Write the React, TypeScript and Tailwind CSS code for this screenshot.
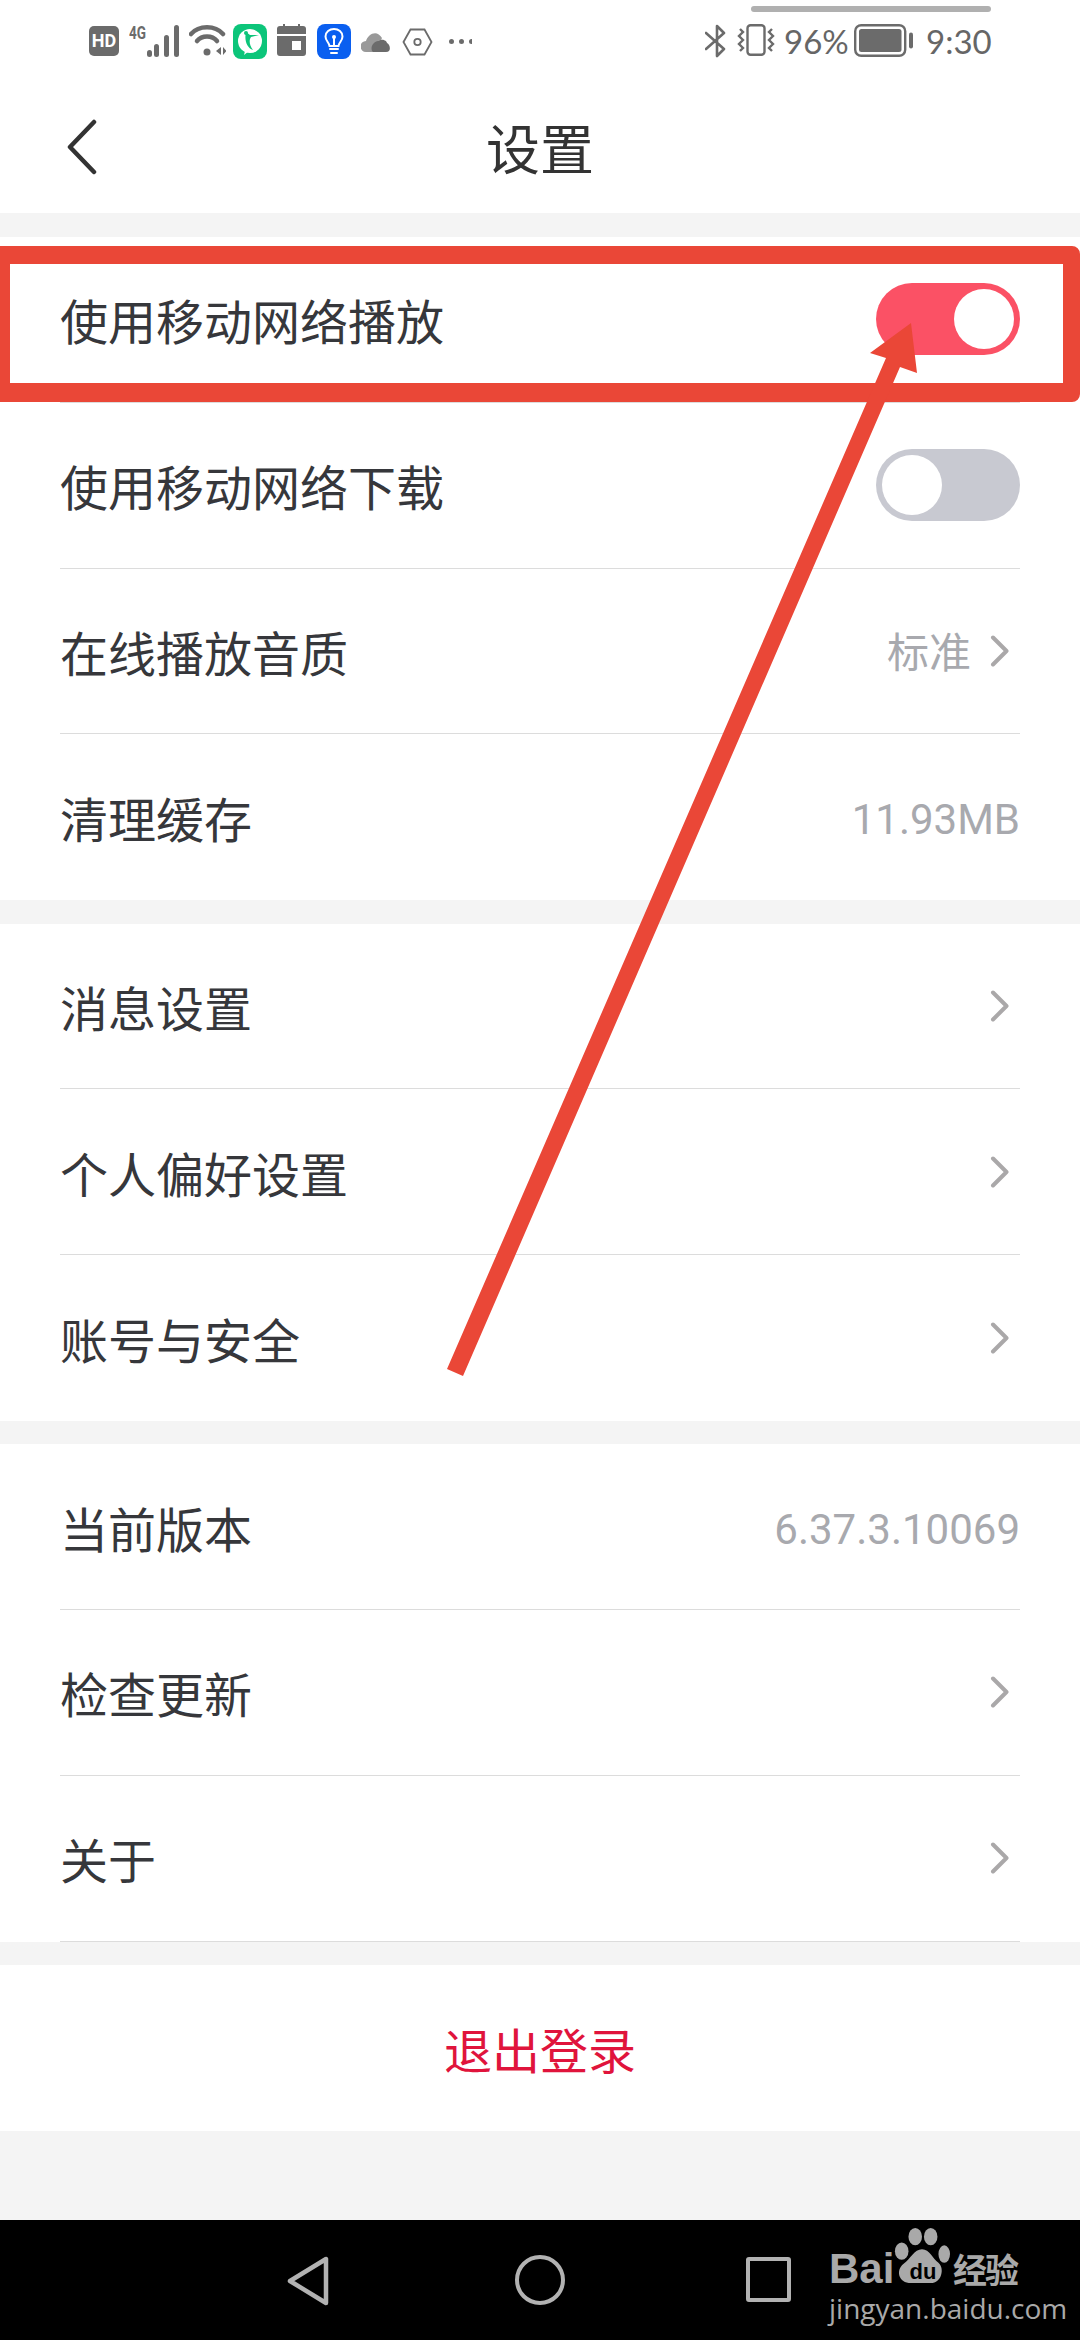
import { ReactNode } from 'react';

const CJK = "font-['Noto_Sans_CJK_SC','Noto_Sans',sans-serif]";

function Chevron() {
  return (
    <svg width="20" height="32" viewBox="0 0 20 32" fill="none" className="shrink-0">
      <path d="M3 2.5 L16.5 16 L3 29.5" stroke="#aaa8a9" strokeWidth="4" strokeLinecap="round" strokeLinejoin="round" />
    </svg>
  );
}

function Toggle({ on }: { on: boolean }) {
  return (
    <div className={`w-[144px] h-[72px] rounded-full p-[6px] flex ${on ? 'bg-[#fb5165] justify-end' : 'bg-[#c8c9d1] justify-start'}`}>
      <div className="w-[60px] h-[60px] rounded-full bg-white" />
    </div>
  );
}

function Row({ label, children, divider = true }: { label: string; children?: ReactNode; divider?: boolean }) {
  return (
    <div className="h-[165.75px] px-[60px]">
      <div className={`h-full flex items-center justify-between ${divider ? 'border-b border-[#dcdcdc]' : ''}`}>
        <span className="text-[48px] leading-none text-[#36373b]">{label}</span>
        {children}
      </div>
    </div>
  );
}

function Value({ text }: { text: string }) {
  return (
    <span className="pt-[6px] text-[42px] leading-none text-[#a8a9ae] font-['Roboto','Noto_Sans_CJK_SC',sans-serif]">
      {text}
    </span>
  );
}

function ChevronSlot() {
  return (
    <div className="pr-[10px] flex items-center">
      <Chevron />
    </div>
  );
}

function StatusBar() {
  return (
    <div className="relative h-[87px] flex items-start pt-[24px] pl-[89px] pr-[91px]">
      <div className="absolute top-[6px] left-[751px] w-[240px] h-[6px] rounded-full bg-[#b0b0b0]" />
      {/* HD */}
      <div className="mt-[2px] w-[30px] h-[30px] rounded-[5px] bg-[#6b6b6b] flex items-center justify-center text-white text-[18px] font-bold leading-[30px] font-['Roboto',sans-serif]">
        HD
      </div>
      {/* 4G signal */}
      <svg className="ml-[10px]" width="51" height="34" viewBox="0 0 51 34" fill="#6b6b6b">
        <text x="0" y="15" fontSize="18" fontWeight="700" fontFamily="Roboto, sans-serif" textLength="17" lengthAdjust="spacingAndGlyphs">4G</text>
        <rect x="18" y="26" width="5" height="7" rx="2.5" />
        <rect x="25" y="20" width="5" height="13" rx="2.5" />
        <rect x="35" y="11" width="5" height="22" rx="2.5" />
        <rect x="45" y="1" width="5" height="32" rx="2.5" />
      </svg>
      {/* wifi */}
      <svg className="ml-[9px]" width="37" height="34" viewBox="0 0 37 34" fill="none" stroke="#6b6b6b" strokeLinecap="round">
        <path d="M2 10 C10 1 26 1 34 10" strokeWidth="4.5" />
        <path d="M8 17 C13 11 23 11 28 17" strokeWidth="4.5" />
        <circle cx="18" cy="28" r="3.5" fill="#6b6b6b" stroke="none" />
        <path d="M27 27 l5 -4 v8 z M34 23 v8 l3.5 -4 z" fill="#6b6b6b" stroke="none" />
      </svg>
      {/* green app */}
      <svg className="ml-[7px]" width="34" height="35" viewBox="0 0 34 35">
        <rect width="34" height="35" rx="8" fill="#0cc57a" />
        <circle cx="17" cy="17" r="12" fill="#fff" />
        <path d="M11 31 l5 -4 h-4 z" fill="#fff" />
        <path d="M13 8 C11 16 14 24 20 26 C16 21 16 16 18 13 L26 11 L17 11 Z" fill="#0cc57a" />
        <circle cx="13" cy="9" r="2" fill="#0cc57a" />
      </svg>
      {/* calendar */}
      <svg className="ml-[10px]" width="29" height="32" viewBox="0 0 29 32" fill="#6b6b6b">
        <rect x="6" y="0" width="2" height="4" />
        <rect x="21" y="0" width="2" height="4" />
        <path d="M0 5 a3 3 0 0 1 3 -3 h23 a3 3 0 0 1 3 3 v5 h-29 z" />
        <path d="M0 12 h29 v17 a3 3 0 0 1 -3 3 h-23 a3 3 0 0 1 -3 -3 z M15 17 v9 h9 v-9 z" fillRule="evenodd" />
      </svg>
      {/* blue app */}
      <svg className="ml-[11px]" width="34" height="35" viewBox="0 0 34 35" fill="none">
        <rect width="34" height="35" rx="8" fill="#0a5ff0" />
        <path d="M12.5 22 C12 18 8.5 17 8.5 12.5 C8.5 8 12.5 5 17 5 C21.5 5 25.5 8 25.5 12.5 C25.5 17 22 18 21.5 22 Z" stroke="#fff" strokeWidth="2" />
        <path d="M17 21 V13" stroke="#fff" strokeWidth="2" />
        <circle cx="17" cy="13" r="2" fill="#fff" />
        <path d="M13 25 H21 M14 29 H20" stroke="#fff" strokeWidth="2" strokeLinecap="round" />
      </svg>
      {/* cloud */}
      <svg className="ml-[10px] mt-[7px]" width="30" height="22" viewBox="0 0 30 22">
        <path d="M5 21 a5 5 0 0 1 0 -11 C7 3 16 -2 21 7 L14 21 Z" fill="#999" />
        <path d="M12 21 C8 17 13 9 18 10 C21 7 26 10 26 12 C29 13 31 21 25 21 Z" fill="#6b6b6b" />
      </svg>
      {/* hexagon */}
      <svg className="ml-[11px] mt-[4px]" width="31" height="28" viewBox="0 0 31 28" fill="none" stroke="#6b6b6b" strokeWidth="1.8">
        <path d="M1.5 14 L8.5 1.5 H22.5 L29.5 14 L22.5 26.5 H8.5 Z" />
        <circle cx="15.5" cy="14" r="3.2" />
      </svg>
      {/* more */}
      <div className="ml-[16px] mt-[15px] flex gap-[5px]">
        <div className="w-[5px] h-[5px] rounded-full bg-[#6b6b6b]" />
        <div className="w-[5px] h-[5px] rounded-full bg-[#6b6b6b]" />
        <div className="w-[3px] h-[5px] rounded-l-full bg-[#6b6b6b]" />
      </div>

      <div className="ml-auto flex items-start">
        {/* bluetooth */}
        <svg width="21" height="34" viewBox="0 0 21 34" fill="none" stroke="#6b6b6b" strokeWidth="2.6" strokeLinejoin="round" strokeLinecap="round">
          <path d="M1 9 L19 25 L12 32 V2 L19 9 L1 25" />
        </svg>
        {/* vibrate */}
        <svg className="ml-[11px]" width="38" height="32" viewBox="0 0 38 32" fill="none" stroke="#6b6b6b" strokeWidth="2.4">
          <rect x="10.5" y="1.2" width="17" height="29.6" rx="3" />
          <path d="M3 5 L6 8 L2 12 L6 16 L2 20 L6 24 L3 27" />
          <path d="M35 5 L32 8 L36 12 L32 16 L36 20 L32 24 L35 27" />
        </svg>
        <span className="ml-[9px] w-[62px] text-[33px] leading-[34px] whitespace-nowrap text-[#666] font-['Lato',sans-serif]">96%</span>
        {/* battery */}
        <svg className="ml-[8px]" width="60" height="33" viewBox="0 0 60 33">
          <rect x="1.2" y="1.2" width="50" height="30.6" rx="6" fill="none" stroke="#6b6b6b" strokeWidth="2.4" />
          <rect x="5" y="5" width="42.5" height="23" rx="2.5" fill="#6b6b6b" />
          <rect x="55" y="8.5" width="4" height="16" rx="2" fill="#6b6b6b" />
        </svg>
        <span className="ml-[12px] w-[63px] text-[33px] leading-[34px] whitespace-nowrap text-[#666] font-['Lato',sans-serif]">9:30</span>
      </div>
    </div>
  );
}

function BaiduMark() {
  return (
    <div className="absolute left-[829px] top-[2225px] w-[195px] h-[100px] text-[#a9a9a9]">
      <span className="absolute left-0 top-[22px] text-[42px] leading-[44px] font-bold font-['Liberation_Sans',sans-serif]">Bai</span>
      <svg className="absolute left-[64px] top-0" width="58" height="62" viewBox="0 0 60 62" fill="#a9a9a9">
        <ellipse cx="23" cy="11" rx="7" ry="9" />
        <ellipse cx="39" cy="11" rx="7" ry="9" />
        <ellipse cx="9" cy="26" rx="7" ry="9" />
        <ellipse cx="53" cy="29" rx="6" ry="9" />
        <path d="M30 24 C38 24 41 34 47 38 C54 44 50 60 38 59 H20 C6 60 2 46 11 39 C18 34 22 24 30 24 Z" />
      </svg>
      <span className="absolute left-[72px] top-[36px] w-[44px] text-center text-[22px] leading-[22px] font-bold text-black font-['Liberation_Sans',sans-serif]">du</span>
      <span className={`absolute left-[124px] top-[24px] text-[34px] leading-[40px] font-bold tracking-[-2px] ${CJK}`}>经验</span>
      <span className="absolute left-0 top-[68px] text-[28px] leading-[30px] font-['Open_Sans',sans-serif]">jingyan.baidu.com</span>
    </div>
  );
}

// 截图上的红框和箭头
function Annotation() {
  return (
    <>
      <div className="absolute left-0 top-[246px] w-[1080px] h-[156px] border-[#ea4737] border-t-[18px] border-b-[19px] border-l-[10px] border-r-[17px] rounded-r-[8px]" />
      <svg className="absolute left-0 top-0" width="1080" height="2340">
        <polygon points="447,1369 886,358 870,353 911,323 917,373 900,367 463,1376" fill="#ea4737" />
      </svg>
    </>
  );
}

export default function App() {
  return (
    <div className={`relative w-[1080px] h-[2340px] flex flex-col bg-[#f4f4f4] overflow-hidden ${CJK}`}>
      <div className="bg-white">
        <StatusBar />
        <div className="relative h-[126px] flex items-center justify-center pb-[6px]">
          <svg className="absolute left-[66px] top-[32px]" width="32" height="56" viewBox="0 0 32 56" fill="none">
            <path d="M28 3 L4 28 L28 53" stroke="#333" strokeWidth="4.5" strokeLinecap="round" strokeLinejoin="round" />
          </svg>
          <span className="text-[54px] leading-none text-[#333]">设置</span>
        </div>
      </div>

      <div className="mt-[24px] bg-white">
        <Row label="使用移动网络播放"><Toggle on /></Row>
        <Row label="使用移动网络下载"><Toggle on={false} /></Row>
        <Row label="在线播放音质">
          <div className="flex items-center gap-[19px] pr-[10px]">
            <Value text="标准" />
            <Chevron />
          </div>
        </Row>
        <Row label="清理缓存" divider={false}><Value text="11.93MB" /></Row>
      </div>

      <div className="mt-[23.5px] bg-white">
        <Row label="消息设置"><ChevronSlot /></Row>
        <Row label="个人偏好设置"><ChevronSlot /></Row>
        <Row label="账号与安全" divider={false}><ChevronSlot /></Row>
      </div>

      <div className="mt-[23.5px] bg-white">
        <Row label="当前版本"><Value text="6.37.3.10069" /></Row>
        <Row label="检查更新"><ChevronSlot /></Row>
        <Row label="关于"><ChevronSlot /></Row>
      </div>

      <div className="mt-[23.5px] h-[166px] bg-white flex items-center justify-center">
        <span className="text-[48px] leading-none text-[#e0143c]">退出登录</span>
      </div>

      <div className="flex-1" />

      <div className="h-[120px] bg-black relative">
        <svg className="absolute left-[285px] top-[34px]" width="48" height="54" viewBox="0 0 48 54" fill="none">
          <path d="M5 27 L41 5 V49 Z" stroke="#b2b2b2" strokeWidth="4.5" strokeLinejoin="round" />
        </svg>
        <div className="absolute left-[515px] top-[35px] w-[50px] h-[50px] rounded-full border-[4.5px] border-[#b2b2b2]" />
        <div className="absolute left-[746px] top-[37px] w-[45px] h-[45px] rounded-[3px] border-[4.5px] border-[#b2b2b2]" />
      </div>

      <BaiduMark />
      <Annotation />
    </div>
  );
}
